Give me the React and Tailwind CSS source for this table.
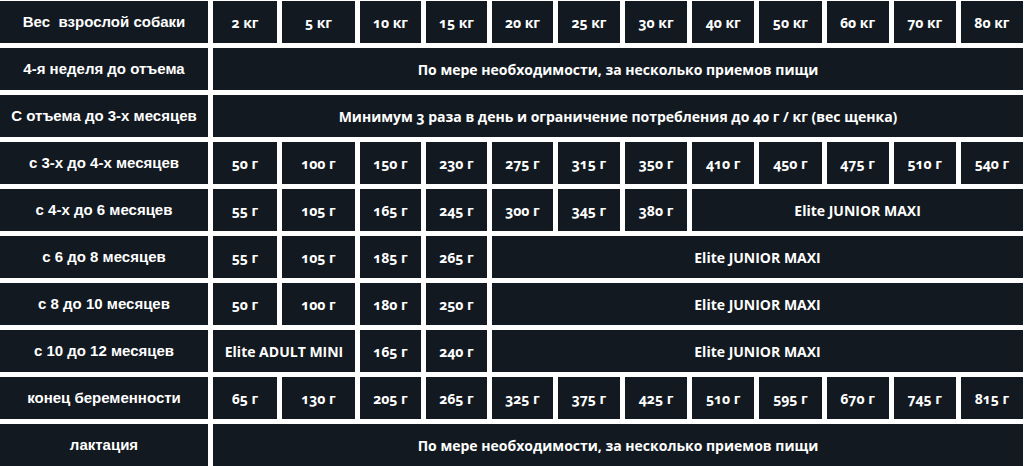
const weights = ['2 кг', '5 кг', '10 кг', '15 кг', '20 кг', '25 кг', '30 кг', '40 кг', '50 кг', '60 кг', '70 кг', '80 кг'];

const data = [
  { label: '4-я неделя до отъема', cells: [{ text: 'По мере необходимости, за несколько приемов пищи', span: 12 }] },
  { label: 'С отъема до 3-х месяцев', cells: [{ text: 'Минимум 3 раза в день и ограничение потребления до 40 г / кг (вес щенка)', span: 12 }] },
  {
    label: 'с 3-х до 4-х месяцев',
    cells: ['50 г', '100 г', '150 г', '230 г', '275 г', '315 г', '350 г', '410 г', '450 г', '475 г', '510 г', '540 г'].map((t) => ({ text: t })),
  },
  {
    label: 'с 4-х до 6 месяцев',
    cells: [
      ...['55 г', '105 г', '165 г', '245 г', '300 г', '345 г', '380 г'].map((t) => ({ text: t })),
      { text: 'Elite JUNIOR MAXI', span: 5 },
    ],
  },
  {
    label: 'с 6 до 8 месяцев',
    cells: [...['55 г', '105 г', '185 г', '265 г'].map((t) => ({ text: t })), { text: 'Elite JUNIOR MAXI', span: 8 }],
  },
  {
    label: 'с 8 до 10 месяцев',
    cells: [...['50 г', '100 г', '180 г', '250 г'].map((t) => ({ text: t })), { text: 'Elite JUNIOR MAXI', span: 8 }],
  },
  {
    label: 'с 10 до 12 месяцев',
    cells: [
      { text: 'Elite ADULT MINI', span: 2 },
      { text: '165 г' },
      { text: '240 г' },
      { text: 'Elite JUNIOR MAXI', span: 8 },
    ],
  },
  {
    label: 'конец беременности',
    cells: ['65 г', '130 г', '205 г', '265 г', '325 г', '375 г', '425 г', '510 г', '595 г', '670 г', '745 г', '815 г'].map((t) => ({ text: t })),
  },
  { label: 'лактация', cells: [{ text: 'По мере необходимости, за несколько приемов пищи', span: 12 }] },
];

// col-span classes written out so tailwind picks them up
const spanClass = {
  1: '',
  2: 'col-span-2',
  5: 'col-span-5',
  8: 'col-span-8',
  12: 'col-span-12',
};

function Label({ children }) {
  return (
    <div className="h-[42px] bg-[#121920] text-white flex items-center justify-center font-['Liberation_Sans',Arial,sans-serif] font-bold text-[15px] whitespace-nowrap">
      {children}
    </div>
  );
}

function Cell({ text, span = 1 }) {
  return (
    <div
      className={`h-[42px] bg-[#121920] text-white flex items-center justify-center font-['Open_Sans',sans-serif] font-bold text-[14px] oldstyle-nums whitespace-nowrap ${spanClass[span]}`}
    >
      {text}
    </div>
  );
}

export default function App() {
  return (
    <div className="w-[1024px] h-[466px] overflow-hidden bg-white pt-[1px]">
      <div className="w-[1023px] grid grid-cols-[208px_64px_73px_61px_61px_61px_62px_repeat(6,1fr)] gap-[5px]">
        <Label>Вес&nbsp; взрослой собаки</Label>
        {weights.map((w) => (
          <Cell key={w} text={w} />
        ))}
        {data.map((row) => [
          <Label key={row.label}>{row.label}</Label>,
          ...row.cells.map((c, i) => <Cell key={row.label + i} text={c.text} span={c.span || 1} />),
        ])}
      </div>
    </div>
  );
}
